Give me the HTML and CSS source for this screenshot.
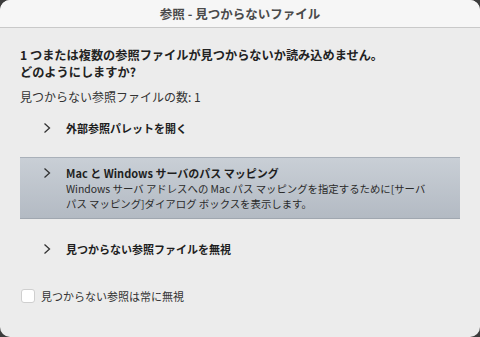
FILE: index.html
```html
<!DOCTYPE html>
<html lang="ja">
<head>
<meta charset="utf-8">
<link rel="stylesheet" href="styles.css">
</head>
<body>
<div class="window">
  <div class="titlebar">参照 - 見つからないファイル</div>
  <div class="content">
    <p class="question">1 つまたは複数の参照ファイルが見つからないか読み込めません。<br>どのようにしますか?</p>
    <p class="count">見つからない参照ファイルの数: 1</p>
    <div class="option">
      <span class="chev"><svg width="8" height="12" viewBox="0 0 8 12"><path d="M1.5 1.5 L6.5 6 L1.5 10.5" fill="none" stroke="#333" stroke-width="1.3"/></svg></span>
      <div class="otext"><div class="otitle">外部参照パレットを開く</div></div>
    </div>
    <div class="option selected">
      <span class="chev"><svg width="8" height="12" viewBox="0 0 8 12"><path d="M1.5 1.5 L6.5 6 L1.5 10.5" fill="none" stroke="#333" stroke-width="1.3"/></svg></span>
      <div class="otext">
        <div class="otitle">Mac と Windows サーバのパス マッピング</div>
        <div class="odesc">Windows サーバ アドレスへの Mac パス マッピングを指定するために[サーバ<br>パス マッピング]ダイアログ ボックスを表示します。</div>
      </div>
    </div>
    <div class="option">
      <span class="chev"><svg width="8" height="12" viewBox="0 0 8 12"><path d="M1.5 1.5 L6.5 6 L1.5 10.5" fill="none" stroke="#333" stroke-width="1.3"/></svg></span>
      <div class="otext"><div class="otitle">見つからない参照ファイルを無視</div></div>
    </div>
    <label class="check"><span class="box"></span><span>見つからない参照は常に無視</span></label>
  </div>
</div>
</body>
</html>
```

FILE: styles.css
```css
html, body {
  margin: 0;
  padding: 0;
  background: #3c3c3c;
}
body {
  width: 480px;
  height: 337px;
  overflow: hidden;
  font-family: "Noto Sans CJK JP", "Noto Sans", sans-serif;
}
.window {
  width: 480px;
  height: 337px;
  background: #ececec;
  border-radius: 10px;
  overflow: hidden;
  display: flex;
  flex-direction: column;
}
.titlebar {
  height: 27px;
  background: #f6f6f6;
  border-bottom: 1px solid #c9c9c9;
  text-align: center;
  font-size: 12.5px;
  font-weight: bold;
  color: #4a4a4a;
  line-height: 27px;
}
.content {
  padding: 19px 20px 0 20px;
}
.question {
  margin: 0;
  font-size: 12.2px;
  font-weight: bold;
  line-height: 17px;
  color: #222;
}
.count {
  margin: 8px 0 0 0;
  font-size: 12px;
  line-height: 16px;
  color: #333;
}
.option {
  display: flex;
  align-items: flex-start;
  padding: 6px 0 6px 23px;
  margin-top: 9px;
}
.chev {
  width: 8px;
  height: 12px;
  margin-top: 2px;
  margin-right: 15px;
  display: flex;
}
.otitle {
  font-size: 11px;
  font-weight: bold;
  color: #1e1e1e;
  line-height: 16px;
}
.odesc {
  font-size: 10.4px;
  color: #2a2a2a;
  line-height: 15px;
}
.selected {
  margin-top: 15px;
  background: linear-gradient(#c9cfd6, #b3bac3);
  border-top: 1px solid #a9b0b9;
  border-bottom: 1px solid #a0a7b0;
  padding-top: 8px;
  padding-bottom: 7px;
}
.selected .otitle {
  line-height: 15px;
}
.selected .chev {
  margin-top: 1px;
}
.selected + .option {
  margin-top: 16px;
}
.check {
  display: flex;
  align-items: center;
  margin-top: 25px;
  margin-left: 1px;
  font-size: 11px;
  color: #333;
}
.box {
  width: 12px;
  height: 12px;
  background: #fff;
  border: 1px solid #cfcfcf;
  border-radius: 3px;
  margin-right: 6px;
}
```
